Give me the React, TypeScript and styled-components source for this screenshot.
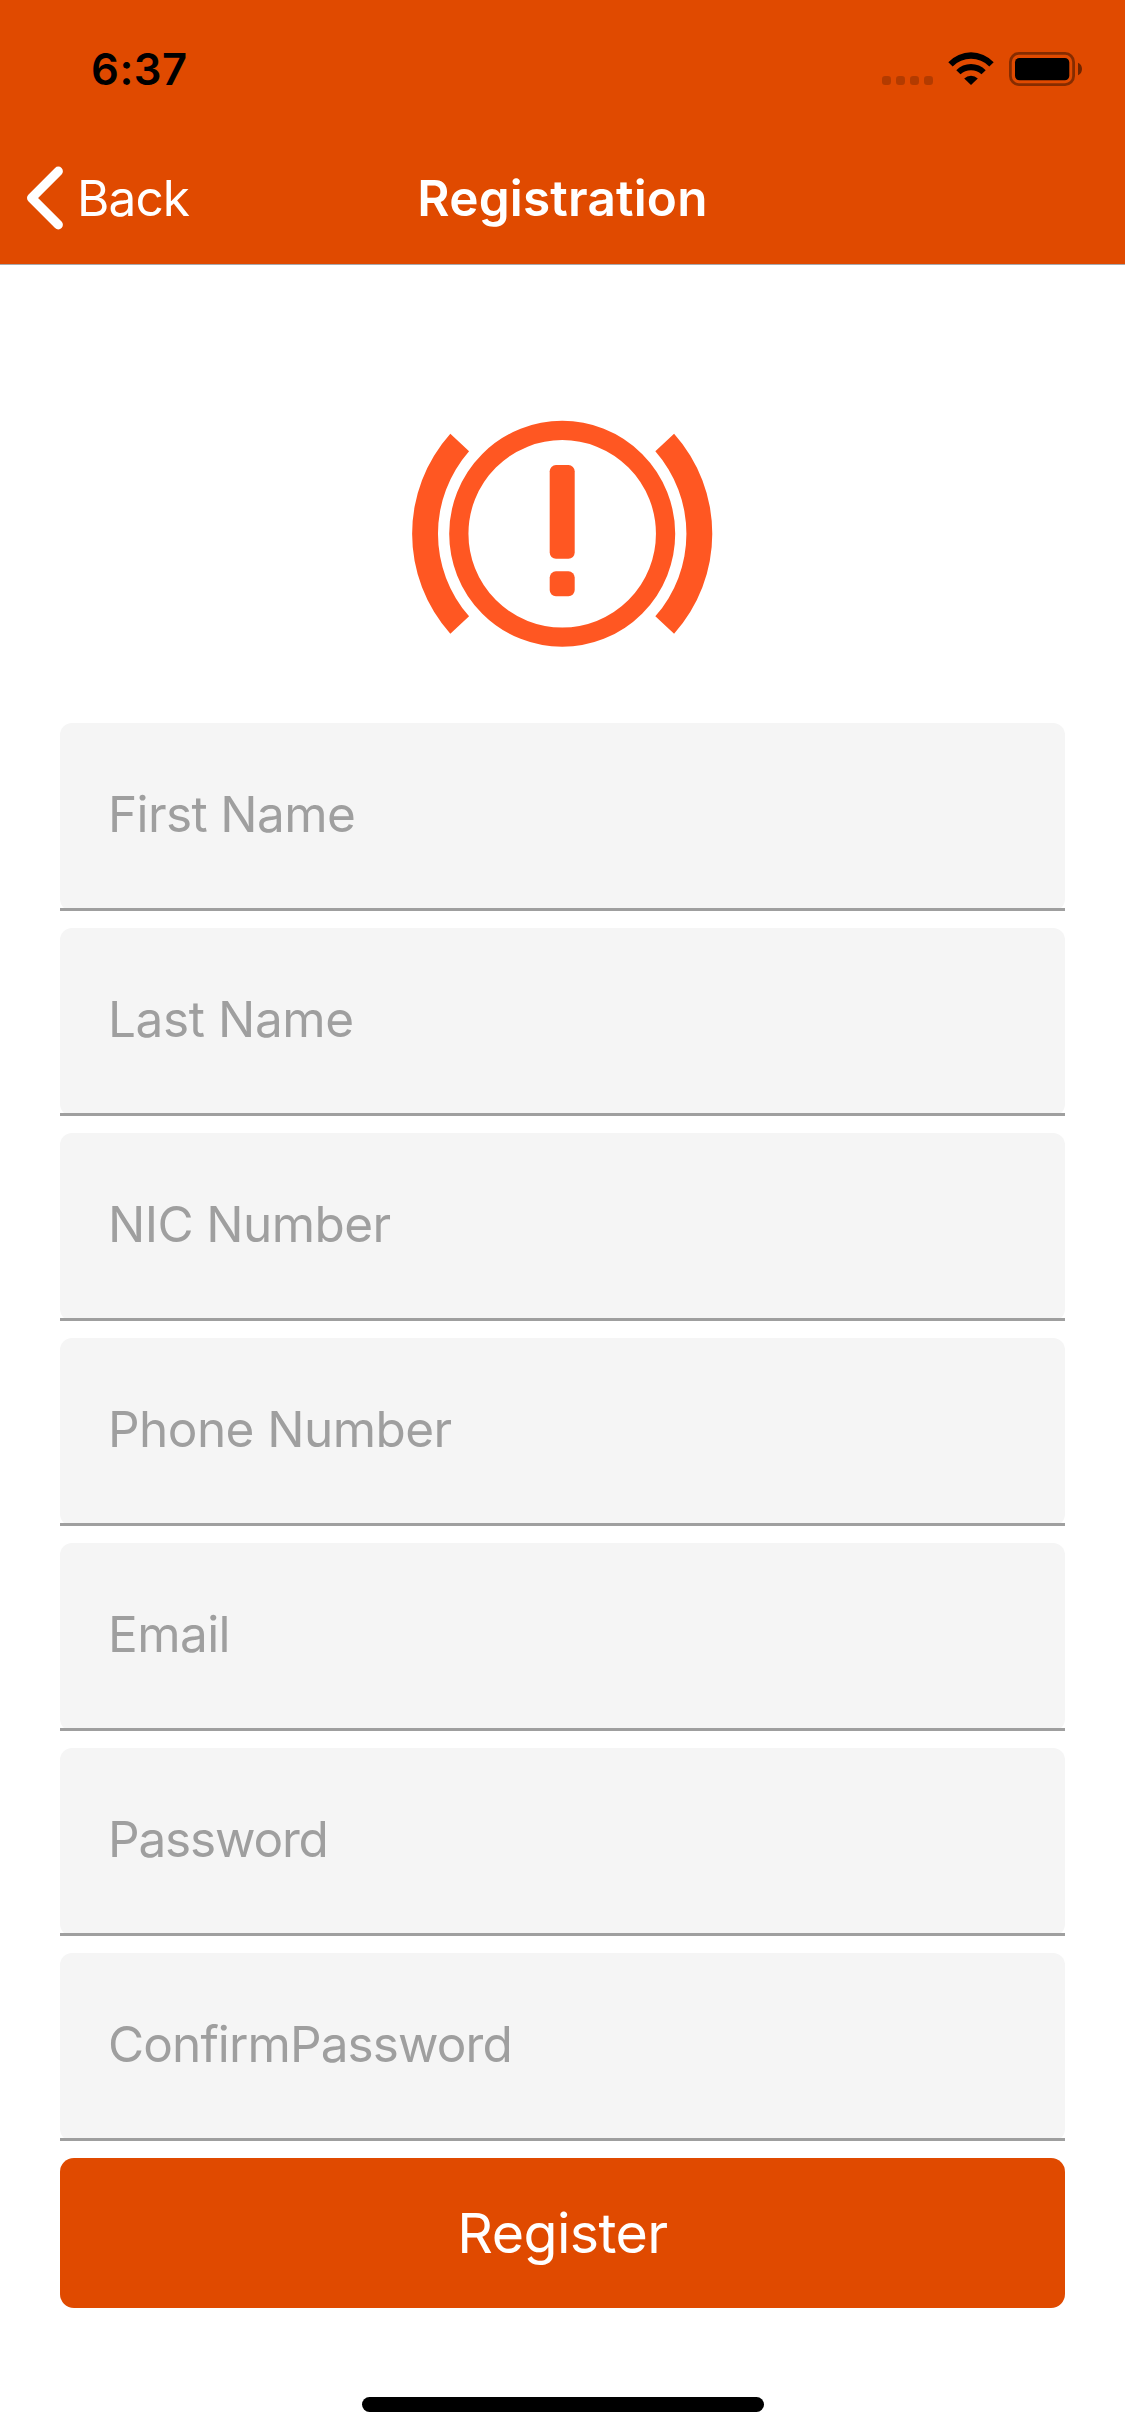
import React from 'react';
import styled, { createGlobalStyle } from 'styled-components';

const ORANGE = '#e04a00';

const GlobalStyle = createGlobalStyle`
  * { box-sizing: border-box; }
  body { margin: 0; background: #fff; }
`;

const Screen = styled.div`
  display: flex;
  flex-direction: column;
  width: 1125px;
  height: 2436px;
  overflow: hidden;
  background: #fff;
  font-family: Inter, Roboto, 'Liberation Sans', sans-serif;
`;

const Header = styled.header`
  display: flex;
  flex-direction: column;
  background: ${ORANGE};
  border-bottom: 1px solid #a9a9ac;
`;

const StatusBar = styled.div`
  display: flex;
  justify-content: space-between;
  align-items: flex-start;
  height: 132px;
  padding: 52px 42px 0 91px;
`;

const Clock = styled.time`
  color: #000;
  font-size: 43.6px;
  line-height: 36px;
  font-weight: 600;
  letter-spacing: 0.5px;
`;

const StatusIcons = styled.svg`
  display: block;
  width: 201px;
  height: 36px;
`;

const NavBar = styled.nav`
  display: grid;
  grid-template-columns: 1fr auto 1fr;
  align-items: center;
  height: 132px;
  padding: 0 26px;
`;

const BackButton = styled.button`
  display: flex;
  align-items: center;
  gap: 11px;
  padding: 0;
  border: 0;
  background: none;
  color: #fff;
  font: 400 49.5px/60px Inter, Roboto, sans-serif;
  letter-spacing: -0.9px;
`;

const Chevron = styled.svg`
  display: block;
  width: 40px;
  height: 66px;
`;

const Title = styled.h1`
  margin: 0;
  color: #fff;
  font-size: 49.5px;
  line-height: 60px;
  font-weight: 600;
  letter-spacing: 0.2px;
`;

const Form = styled.form`
  display: flex;
  flex-direction: column;
  gap: 17px;
  padding: 119px 60px 0;
`;

const Logo = styled.svg`
  display: block;
  align-self: center;
  width: 301px;
  height: 300px;
  margin-bottom: 22px;
`;

const Field = styled.label`
  display: flex;
  flex-direction: column;
  height: 188px;
  border-radius: 12px;
  background: #f5f5f5;
`;

const Placeholder = styled.span<{ $tracking: number }>`
  display: flex;
  flex: 1;
  align-items: center;
  padding: 0 48px 3px;
  color: #9f9f9f;
  font-size: 49.5px;
  line-height: 60px;
  letter-spacing: ${(p) => p.$tracking}px;
`;

const Underline = styled.span`
  height: 3px;
  background: #9f9f9f;
`;

const RegisterButton = styled.button`
  height: 150px;
  padding: 0;
  border: 0;
  border-radius: 14px;
  background: ${ORANGE};
  color: #fff;
  font: 400 55.5px/68px Inter, Roboto, sans-serif;
  letter-spacing: -0.57px;
`;

const HomeIndicator = styled.div`
  align-self: center;
  width: 402px;
  height: 15px;
  margin: auto 0 24px;
  border-radius: 8px;
  background: #000;
`;

const fields = [
  { label: 'First Name', tracking: -0.62 },
  { label: 'Last Name', tracking: -0.4 },
  { label: 'NIC Number', tracking: -0.58 },
  { label: 'Phone Number', tracking: -0.56 },
  { label: 'Email', tracking: -0.58 },
  { label: 'Password', tracking: -1.17 },
  { label: 'ConfirmPassword', tracking: -0.89 },
];

export default function App() {
  return (
    <Screen>
      <GlobalStyle />
      <Header>
        <StatusBar>
          <Clock>6:37</Clock>
          <StatusIcons viewBox="882 52 201 36" aria-hidden="true">
            <g fillOpacity="0.2">
              {[882, 896, 910, 924].map((x) => (
                <rect key={x} x={x} y="76" width="9" height="9" rx="3.2" />
              ))}
            </g>
            <path d="M948.3 62.2 A31 31 0 0 1 993.7 62.2 L989.3 66.4 A26 26 0 0 0 952.7 66.4 Z" />
            <path d="M956.3 70.2 A20.5 20.5 0 0 1 985.7 70.2 L981.5 74.3 A15.5 15.5 0 0 0 960.5 74.3 Z" />
            <path d="M964.2 78.4 A9.8 9.8 0 0 1 977.8 78.4 L971 85 Z" />
            <rect x="1010.4" y="53.4" width="63.2" height="31.2" rx="8.5" fill="none" stroke="#000" strokeOpacity="0.4" strokeWidth="2.8" />
            <rect x="1015" y="58" width="54.3" height="22.2" rx="4.5" />
            <path d="M1078 62.7 C1080.4 63.6 1082 66 1082 69 C1082 72 1080.4 74.4 1078 75.3 Z" fillOpacity="0.5" />
          </StatusIcons>
        </StatusBar>
        <NavBar>
          <BackButton type="button">
            <Chevron viewBox="26 165.5 40 66" aria-hidden="true">
              <path d="M58.3 171.7 L31.6 198.5 L58.3 225.3" fill="none" stroke="#fff" strokeWidth="9.2" strokeLinecap="round" strokeLinejoin="round" />
            </Chevron>
            Back
          </BackButton>
          <Title>Registration</Title>
        </NavBar>
      </Header>
      <Form>
        <Logo viewBox="0 0 301 300" aria-hidden="true">
          <g transform="translate(0.2 -0.2) scale(12.5)">
            <g fill="#ff5722">
              <path d="M3.05 4 A12 12 0 0 0 3.05 20 L4.55 18.6 A10 10 0 0 1 4.55 5.4 Z" />
              <path d="M20.95 4 A12 12 0 0 1 20.95 20 L19.45 18.6 A10 10 0 0 0 19.45 5.4 Z" />
              <rect x="11" y="6.5" width="2" height="7.5" rx="0.5" />
              <rect x="11" y="15" width="2" height="2" rx="0.5" />
            </g>
            <circle cx="12" cy="12" r="8.27" fill="none" stroke="#ff5722" strokeWidth="1.54" />
          </g>
        </Logo>
        {fields.map((f) => (
          <Field key={f.label}>
            <Placeholder $tracking={f.tracking}>{f.label}</Placeholder>
            <Underline />
          </Field>
        ))}
        <RegisterButton type="button">Register</RegisterButton>
      </Form>
      <HomeIndicator />
    </Screen>
  );
}
